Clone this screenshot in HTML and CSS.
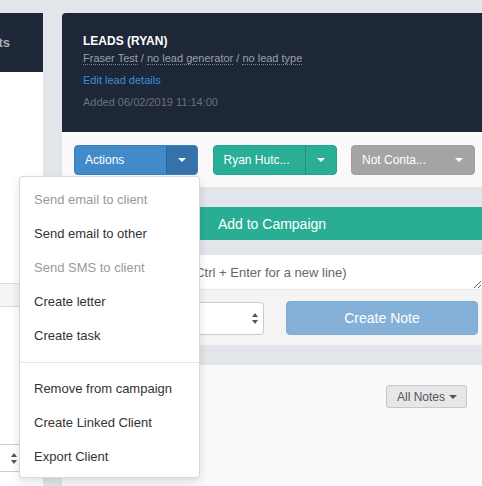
FILE: index.html
```html
<!DOCTYPE html>
<html lang="en">
<head>
<meta charset="utf-8">
<title>Lead</title>
<link rel="stylesheet" href="styles.css">
</head>
<body>
<div class="page">
  <aside class="side">
    <div class="side-head"><span>Contacts</span></div>
    <div class="side-body">
      <div class="side-band"></div>
      <div class="side-select">
        <svg class="updown" width="6" height="11" viewBox="0 0 6 11"><path d="M3 0 L6 4 L0 4 Z M0 7 L6 7 L3 11 Z" fill="#555"/></svg>
      </div>
    </div>
  </aside>

  <main class="main">
    <header class="lead-header">
      <h1 class="lead-title">LEADS (RYAN)</h1>
      <p class="lead-sub"><span class="dotted">Fraser Test</span> / <span class="dotted">no lead generator</span> / <span class="dotted">no lead type</span></p>
      <a class="lead-edit" href="#">Edit lead details</a>
      <p class="lead-added">Added 06/02/2019 11:14:00</p>
    </header>

    <div class="actions-bar">
      <div class="btn-group btn-blue">
        <span class="btn-label">Actions</span>
        <span class="btn-caret"><span class="caret"></span></span>
        <ul class="dropdown">
          <li class="disabled">Send email to client</li>
          <li>Send email to other</li>
          <li class="disabled">Send SMS to client</li>
          <li>Create letter</li>
          <li>Create task</li>
          <li class="divider"></li>
          <li>Remove from campaign</li>
          <li>Create Linked Client</li>
          <li>Export Client</li>
        </ul>
      </div>
      <div class="btn-group btn-green">
        <span class="btn-label">Ryan Hutc...</span>
        <span class="btn-caret"><span class="caret"></span></span>
      </div>
      <div class="btn-group btn-grey">
        <span class="btn-label">Not Conta...</span>
        <span class="btn-caret"><span class="caret"></span></span>
      </div>
    </div>

    <div class="campaign">Add to Campaign</div>

    <form class="note-form">
      <textarea class="note-input" placeholder="Note (Enter to save, Ctrl + Enter for a new line)"></textarea>
      <div class="note-row">
        <div class="fake-select">
          <svg class="updown" width="6" height="11" viewBox="0 0 6 11"><path d="M3 0 L6 4 L0 4 Z M0 7 L6 7 L3 11 Z" fill="#555"/></svg>
        </div>
        <button type="button" class="create-note">Create Note</button>
      </div>
    </form>

    <section class="notes">
      <button type="button" class="all-notes">All Notes <span class="caret caret-dark"></span></button>
    </section>
  </main>
</div>
</body>
</html>
```

FILE: styles.css
```css
html, body {
  margin: 0;
  height: 100%;
  overflow: hidden;
}
body {
  background: #e2e5e9;
  font-family: "Liberation Sans", Arial, sans-serif;
  color: #333;
}
.page {
  display: flex;
  gap: 19px;
  padding-top: 13px;
  width: 482px;
  height: 486px;
  box-sizing: border-box;
}

/* left column */
.side {
  width: 43px;
  flex: none;
  display: flex;
  flex-direction: column;
  overflow: hidden;
}
.side-head {
  box-sizing: border-box;
  height: 59px;
  flex: none;
  background: #1e2737;
  display: flex;
  align-items: center;
  justify-content: flex-end;
  padding-right: 33px;
  color: #a9aeb6;
  font-weight: bold;
  font-size: 13px;
  white-space: nowrap;
}
.side-head span { flex: none; }
.side-body {
  flex: 1;
  background: #fff;
  display: flex;
  flex-direction: column;
}
.side-band {
  margin-top: 211px;
  height: 22px;
  background: #f5f5f5;
  border-top: 1px solid #dcdcdc;
  border-bottom: 1px solid #dcdcdc;
}
.side-select {
  box-sizing: border-box;
  margin-top: auto;
  margin-bottom: 14px;
  width: 22px;
  height: 28px;
  border: 1px solid #ccc;
  border-left: none;
  border-radius: 0 4px 4px 0;
  display: flex;
  align-items: center;
  justify-content: flex-end;
  padding-right: 4px;
}

/* main column */
.main {
  width: 420px;
  flex: none;
  display: flex;
  flex-direction: column;
}
.lead-header {
  background: #1e2737;
  border-radius: 4px 0 0 0;
  padding: 21px 21px 23px;
}
.lead-title {
  margin: 0;
  font-size: 12px;
  line-height: 14px;
  font-weight: bold;
  color: #fff;
}
.lead-sub {
  margin: 3px 0 0;
  font-size: 11px;
  line-height: 14px;
  color: #9aa0a8;
}
.dotted {
  border-bottom: 1px dotted #7d838c;
}
.lead-edit {
  display: block;
  margin-top: 8px;
  font-size: 11px;
  line-height: 14px;
  color: #3a8fdb;
  text-decoration: none;
}
.lead-added {
  margin: 8px 0 0;
  font-size: 11px;
  line-height: 14px;
  color: #6b727c;
}

.actions-bar {
  background: #fafafa;
  padding: 13px 7px 12px 12px;
  display: flex;
  justify-content: space-between;
}
.btn-group {
  position: relative;
  width: 124px;
  height: 30px;
  display: flex;
  border-radius: 4px;
  color: #fff;
  font-size: 12px;
}
.btn-label {
  flex: 1;
  display: flex;
  align-items: center;
  padding-left: 10px;
  white-space: nowrap;
}
.btn-caret {
  width: 30px;
  display: flex;
  align-items: center;
  justify-content: center;
  border-radius: 0 4px 4px 0;
}
.caret {
  display: inline-block;
  width: 0;
  height: 0;
  border-left: 4px solid transparent;
  border-right: 4px solid transparent;
  border-top: 4px solid #fff;
}
.btn-blue { background: #428bca; border: 1px solid #3b7fba; box-sizing: border-box; }
.btn-blue .btn-caret { background: #3572a9; border-left: 1px solid #2d6496; }
.btn-green { background: #2aae95; border: 1px solid #27a48c; box-sizing: border-box; }
.btn-green .btn-caret { border-left: 1px solid #23937d; }
.btn-grey { background: #a4a4a4; border: 1px solid #9e9e9e; box-sizing: border-box; }
.btn-grey .btn-caret { padding-left: 3px; }

.dropdown {
  position: absolute;
  top: calc(100% + 2px);
  right: -3px;
  z-index: 10;
  width: 181px;
  box-sizing: border-box;
  margin: 0;
  padding: 6px 0 3px;
  list-style: none;
  background: #fff;
  border: 1px solid rgba(0, 0, 0, 0.15);
  border-radius: 4px;
  box-shadow: 0 4px 10px rgba(0, 0, 0, 0.12);
}
.dropdown li {
  padding: 7px 14px;
  font-size: 13px;
  line-height: 20px;
  color: #333;
  white-space: nowrap;
}
.dropdown li.disabled { color: #999; }
.dropdown li.divider {
  height: 1px;
  padding: 0;
  margin: 9px 0;
  background: #e5e5e5;
}

.campaign {
  margin-top: 20px;
  height: 33px;
  background: #29ae94;
  color: #fff;
  font-size: 14px;
  display: flex;
  align-items: center;
  justify-content: center;
}

.note-form {
  margin: 15px 0 0;
  display: flex;
  flex-direction: column;
}
.note-input {
  display: block;
  box-sizing: border-box;
  width: 100%;
  height: 35px;
  margin: 0;
  border: none;
  border-bottom: 1px solid #e6e6e6;
  background: #fff;
  padding: 10px 12px 8px 14px;
  font-family: "Liberation Sans", Arial, sans-serif;
  font-size: 13px;
  line-height: 15px;
  color: #333;
  resize: vertical;
  outline: none;
}
.note-input::placeholder { color: #666; }
.note-row {
  background: #f4f4f4;
  height: 55px;
  box-sizing: border-box;
  padding: 11px 4px 10px 12px;
  display: grid;
  grid-template-columns: 190px 192px;
  column-gap: 22px;
  align-items: start;
}
.fake-select {
  box-sizing: border-box;
  margin-top: 1px;
  height: 33px;
  background: #fff;
  border: 1px solid #ccc;
  border-radius: 4px;
  display: flex;
  align-items: center;
  justify-content: flex-end;
  padding-right: 5px;
}
.create-note {
  height: 34px;
  margin: 0;
  border: 1px solid #7eaad3;
  border-radius: 4px;
  background: #85b0d8;
  color: #fff;
  font-family: "Liberation Sans", Arial, sans-serif;
  font-size: 14px;
  padding: 0;
}

.notes {
  margin-top: 20px;
  flex: 1;
  background: #fafafa;
  padding: 20px 15px;
  display: flex;
  justify-content: flex-end;
  align-items: flex-start;
}
.all-notes {
  height: 23px;
  width: 81px;
  box-sizing: border-box;
  margin: 0;
  padding: 0 0 0 10px;
  border: 1px solid #c6c8cb;
  border-radius: 3px;
  background: #e6e7e9;
  color: #555;
  font-family: "Liberation Sans", Arial, sans-serif;
  font-size: 12px;
  display: flex;
  align-items: center;
  gap: 4px;
}
.caret-dark { border-top-color: #555; }
```
